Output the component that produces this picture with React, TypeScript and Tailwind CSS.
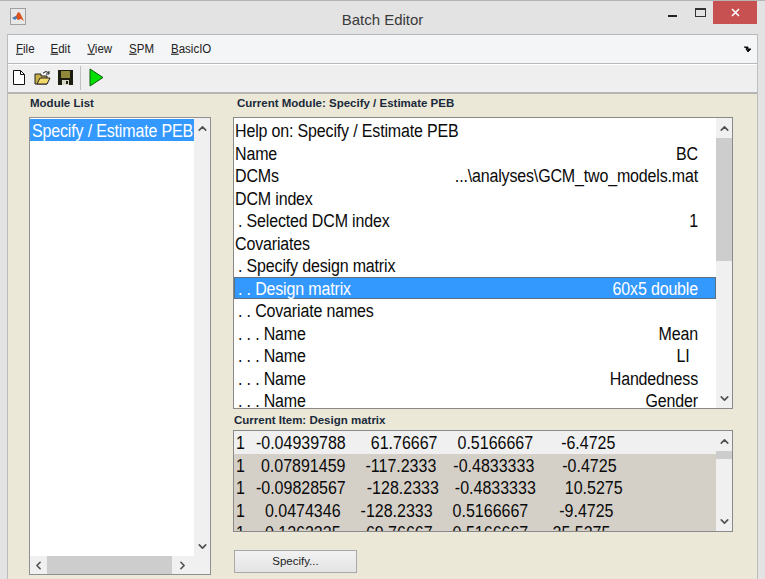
import { ChevronUp, ChevronDown, ChevronLeft, ChevronRight } from "lucide-react";

const rows = [
  { label: "Help on: Specify / Estimate PEB", value: "" },
  { label: "Name", value: "BC" },
  { label: "DCMs", value: "...\\analyses\\GCM_two_models.mat" },
  { label: "DCM index", value: "" },
  { label: ". Selected DCM index", value: "1", nested: true },
  { label: "Covariates", value: "" },
  { label: ". Specify design matrix", value: "", nested: true },
  { label: ". . Design matrix", value: "60x5 double", nested: true, selected: true },
  { label: ". . Covariate names", value: "", nested: true },
  { label: ". . . Name", value: "Mean", nested: true },
  { label: ". . . Name", value: "LI  ", nested: true },
  { label: ". . . Name", value: "Handedness", nested: true },
  { label: ". . . Name", value: "Gender", nested: true },
];

const matrix = [
  ["1", "-0.04939788", "61.76667", "0.5166667", "-6.4725"],
  ["1", "0.07891459", "-117.2333", "-0.4833333", "-0.4725"],
  ["1", "-0.09828567", "-128.2333", "-0.4833333", "10.5275"],
  ["1", "0.0474346", "-128.2333", "0.5166667", "-9.4725"],
  ["1", "0.1263335", "-69.76667", "0.5166667", "-25.5275"],
];

const matrixPads = [
  ["pl-[2px]", "pl-[11px]", "pl-[25px]", "pl-[20px]", "pl-[28px]"],
  ["pl-[2px]", "pl-[16px]", "pl-[20px]", "pl-[17px]", "pl-[28px]"],
  ["pl-[2px]", "pl-[11px]", "pl-[21px]", "pl-[16px]", "pl-[29px]"],
  ["pl-[2px]", "pl-[20px]", "pl-[20px]", "pl-[20px]", "pl-[31px]"],
  ["pl-[2px]", "pl-[20px]", "pl-[20px]", "pl-[20px]", "pl-[19px]"],
];

function VScroll({ thumb }: { thumb: string }) {
  return (
    <div className="w-[16px] shrink-0 flex flex-col bg-[#f0f0f0]">
      <div className="h-[20px] flex items-center justify-center shrink-0">
        <ChevronUp size={13} strokeWidth={3} className="text-[#505050]" />
      </div>
      <div className="flex-1 min-h-0">
        <div className={`${thumb} bg-[#cdcdcd]`} />
      </div>
      <div className="h-[20px] flex items-center justify-center shrink-0">
        <ChevronDown size={13} strokeWidth={3} className="text-[#505050]" />
      </div>
    </div>
  );
}

function MatlabIcon() {
  return (
    <div className="w-[16px] h-[17px] border border-[#a0a0a0] bg-[#e8e8e8] flex items-center justify-center">
      <svg width="12" height="11" viewBox="0 0 12 11">
        <path d="M0 7 L4 5 L6 1 L8 2 L12 10 L9 8 L6 9 L4 7 Z" fill="#d9531e" />
        <path d="M0 7 L4 5 L5 7 L3 9 Z" fill="#3f7fc1" />
      </svg>
    </div>
  );
}

function MenuItem({ first, rest, className }: { first: string; rest: string; className: string }) {
  return (
    <span className={`${className} inline-block scale-y-[1.15]`}>
      <u>{first}</u>
      {rest}
    </span>
  );
}

export default function App() {
  return (
    <div className="w-[765px] h-[579px] overflow-hidden bg-[#e3e3e3] border-t border-[#b5b5b5] flex flex-col font-['Liberation_Sans',Arial,sans-serif] text-[#0a0a0a]">
      <div className="h-[33px] shrink-0 grid grid-cols-[1fr_auto_1fr]">
        <div className="pl-[10px] pt-[7px]">
          <MatlabIcon />
        </div>
        <div className="text-center text-[15px] pt-[8px] text-[#3a3a3a]">Batch Editor</div>
        <div className="flex items-start justify-end">
          <div className="w-[26px] h-[24px] mr-[2px] flex justify-center pt-[14px]">
            <div className="w-[9px] h-[2px] bg-[#222]" />
          </div>
          <div className="w-[26px] h-[24px] flex justify-center pt-[7px]">
            <div className="w-[11px] h-[9px] border border-[#333] border-t-[2px]" />
          </div>
          <div className="w-[44px] h-[23px] mr-[8px] bg-[#c75050] flex items-center justify-center">
            <svg width="9" height="9" viewBox="0 0 9 9">
              <path d="M1 1 L8 8 M8 1 L1 8" stroke="#fff" strokeWidth="1.6" />
            </svg>
          </div>
        </div>
      </div>

      <div className="mx-[7px] flex-1 min-h-0 border-l border-r border-[#bdbdbd] flex flex-col">
        <div className="h-[30px] shrink-0 bg-[#f4f5f7] border-t border-b border-[#b9b9b9] flex items-center text-[11.5px] text-[#222] relative">
          <MenuItem first="F" rest="ile" className="ml-[8px]" />
          <MenuItem first="E" rest="dit" className="ml-[16px]" />
          <MenuItem first="V" rest="iew" className="ml-[17px]" />
          <MenuItem first="S" rest="PM" className="ml-[17px]" />
          <MenuItem first="B" rest="asicIO" className="ml-[17px]" />
          <svg className="absolute right-[5px] top-[11px]" width="8" height="7" viewBox="0 0 8 7">
            <path d="M0 1 H4 V4 M2 3 L4 6 L7 3 Z" stroke="#111" strokeWidth="1" fill="#111" />
          </svg>
        </div>

        <div className="h-[30px] shrink-0 bg-[#efefef] border-t border-white border-b-2 border-b-[#b5b5b5] flex items-center pb-[2px]">
          <svg className="ml-[5px]" width="12" height="15" viewBox="0 0 12 15">
            <path d="M0.5 0.5 H7.5 L11.5 4.5 V14.5 H0.5 Z" fill="#fff" stroke="#111" />
            <path d="M7.5 0.5 V4.5 H11.5" fill="none" stroke="#111" />
          </svg>
          <svg className="ml-[9px]" width="17" height="15" viewBox="0 0 17 15">
            <path d="M1 4 H7 V6 H13 V14 H1 Z" fill="#c9b24a" stroke="#222" />
            <path d="M3 14 L6 8 H16 L13 14 Z" fill="#f2d96a" stroke="#222" />
            <path d="M9 3 Q12 0 15 3 M15 1 V4 H12" fill="none" stroke="#222" />
          </svg>
          <svg className="ml-[7px]" width="15" height="15" viewBox="0 0 15 15">
            <path d="M0 0 H15 V15 H0 Z" fill="#1c1c10" />
            <path d="M3 1 H12 V8 H3 Z" fill="#8f8a3a" />
            <path d="M4 10 H11 V15 H4 Z" fill="#d8d8c8" />
            <path d="M8 11 H10 V14 H8 Z" fill="#1c1c10" />
          </svg>
          <div className="ml-[7px] w-px h-[24px] bg-[#c0c0c0]" />
          <svg className="ml-[8px]" width="15" height="19" viewBox="0 0 15 19">
            <path d="M1 1 L14 9.5 L1 18 Z" fill="#00e000" stroke="#0a5a0a" />
          </svg>
        </div>

        <div className="flex-1 min-h-0 bg-[#ebe8d8] flex pl-[21px] pr-[24px]">
          <div className="w-[182px] shrink-0 flex flex-col">
            <div className="h-[23px] pt-[3px] text-[11.5px] leading-[13px] font-bold text-[#1a2a3a] pl-[1px]">Module List</div>
            <div className="h-[458px] border border-[#8f8f96] bg-white flex flex-col text-[16px]">
              <div className="flex-1 min-h-0 flex">
                <div className="flex-1 min-w-0 overflow-hidden pt-[1px]">
                  <div className="h-[22px] bg-[#3399ff] text-white pl-[2px] leading-[24px] tracking-[-0.16px] whitespace-nowrap overflow-hidden">
                    <span className="inline-block scale-y-[1.15]">Specify / Estimate PEB</span>
                  </div>
                </div>
                <VScroll thumb="h-0" />
              </div>
              <div className="h-[18px] shrink-0 flex bg-[#f0f0f0]">
                <div className="w-[17px] flex items-center justify-center">
                  <ChevronLeft size={13} strokeWidth={3} className="text-[#505050]" />
                </div>
                <div className="w-[125px] bg-[#cdcdcd]" />
                <div className="w-[20px] flex items-center justify-center">
                  <ChevronRight size={13} strokeWidth={3} className="text-[#505050]" />
                </div>
              </div>
            </div>
          </div>

          <div className="ml-[22px] flex-1 min-w-0 flex flex-col">
            <div className="h-[23px] pt-[3px] text-[11.5px] leading-[13px] font-bold text-[#1a2a3a] pl-[4px]">Current Module: Specify / Estimate PEB</div>
            <div className="h-[292px] shrink-0 border border-[#8a8a8a] bg-white flex text-[16px]">
              <div className="flex-1 min-w-0 overflow-hidden pt-[1px]">
                {rows.map((r, i) => (
                  <div
                    key={i}
                    className={`h-[22.5px] leading-[24px] tracking-[-0.16px] ${r.selected ? "bg-[#3399ff] text-white outline outline-1 -outline-offset-1 outline-[#5b6f80]" : ""}`}
                  >
                    <div className={`flex justify-between scale-y-[1.15] pr-[18px] whitespace-pre ${r.nested ? "pl-[4px]" : "pl-[1px]"}`}>
                      <span>{r.label}</span>
                      <span>{r.value}</span>
                    </div>
                  </div>
                ))}
              </div>
              <VScroll thumb="h-[123px]" />
            </div>
            <div className="h-[21px] shrink-0 pt-[5px] text-[11.5px] leading-[13px] font-bold text-[#1a2a3a] pl-[1px]">Current Item: Design matrix</div>
            <div className="h-[102px] shrink-0 border border-[#8a8a8a] bg-[#d4d0c8] flex text-[16px]">
              <div className="flex-1 min-w-0 overflow-hidden">
                {matrix.map((m, i) => (
                  <div key={i} className={`h-[22.5px] leading-[24px] ${i === 0 ? "bg-[#f0f0f0]" : ""}`}>
                    <div className="flex whitespace-pre scale-y-[1.15]">
                      {m.map((c, j) => (
                        <span key={j} className={matrixPads[i][j]}>{c}</span>
                      ))}
                    </div>
                  </div>
                ))}
              </div>
              <VScroll thumb="h-[8px]" />
            </div>
            <button className="mt-[18px] ml-[1px] h-[23px] w-[123px] border border-[#a8a8a8] bg-gradient-to-b from-[#f2f2f2] to-[#e4e4e4] text-[11.5px] text-[#222]">Specify...</button>
          </div>
        </div>
      </div>
    </div>
  );
}
